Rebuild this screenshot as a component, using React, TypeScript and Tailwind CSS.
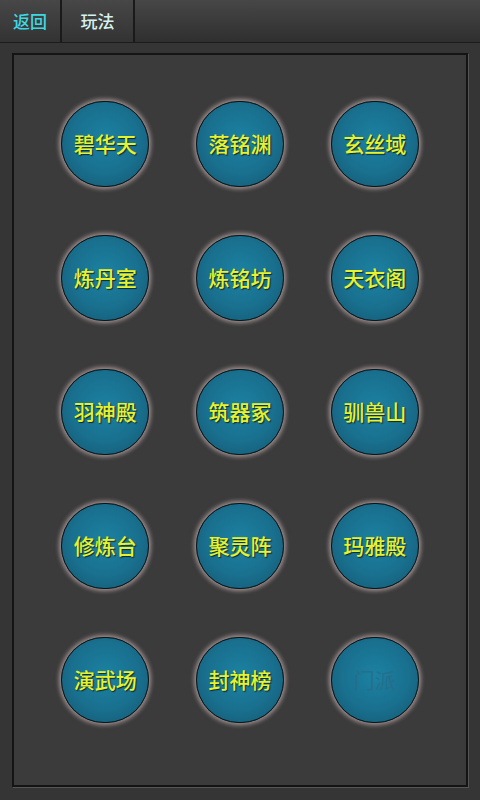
const halls = [
  "碧华天", "落铭渊", "玄丝域",
  "炼丹室", "炼铭坊", "天衣阁",
  "羽神殿", "筑器冢", "驯兽山",
  "修炼台", "聚灵阵", "玛雅殿",
  "演武场", "封神榜", "门派",
];

const font = { fontFamily: '"Noto Sans CJK SC", "Noto Sans", sans-serif' };

export default function App() {
  return (
    <div className="w-[480px] h-[800px] bg-[#353535] flex flex-col overflow-hidden" style={font}>
      <div className="h-[43px] flex bg-gradient-to-b from-[#474747] to-[#2f2f2f] border-b border-[#1c1c1c]">
        <button className="w-[62px] h-full border-r-2 border-[#1a1a1a] text-[17px] font-medium text-[#3fd8e2] bg-gradient-to-b from-[#474747] to-[#333]">
          返回
        </button>
        <button className="w-[73px] h-full border-r-2 border-[#1a1a1a] text-[17px] font-medium text-[#d6f2f0] bg-gradient-to-b from-[#474747] to-[#333]">
          玩法
        </button>
        <div className="flex-1" />
      </div>
      <div className="mx-[12px] mt-[10px] h-[734px] bg-[#3b3b3b] border-2 border-[#141414] shadow-[1px_1px_0_#555]">
        <div className="grid grid-cols-3 px-[24px] pt-[22px]">
          {halls.map((name, i) => (
            <div key={name} className="h-[134px] flex items-center justify-center">
              <div className="w-[88px] h-[86px] rounded-full border-[1.5px] border-[#08161b] bg-[radial-gradient(circle_at_50%_45%,#1c82a2_0%,#196f8e_55%,#13566d_100%)] shadow-[0_0_4px_2px_rgba(230,200,200,0.6)] flex items-center justify-center">
                {i === halls.length - 1 ? (
                  <span className="text-[21px] text-[#2a6a86] opacity-70">{name}</span>
                ) : (
                  <span className="text-[21px] font-medium text-[#e8f22c] [text-shadow:1px_1px_1px_#0a2a35]">{name}</span>
                )}
              </div>
            </div>
          ))}
        </div>
      </div>
    </div>
  );
}
